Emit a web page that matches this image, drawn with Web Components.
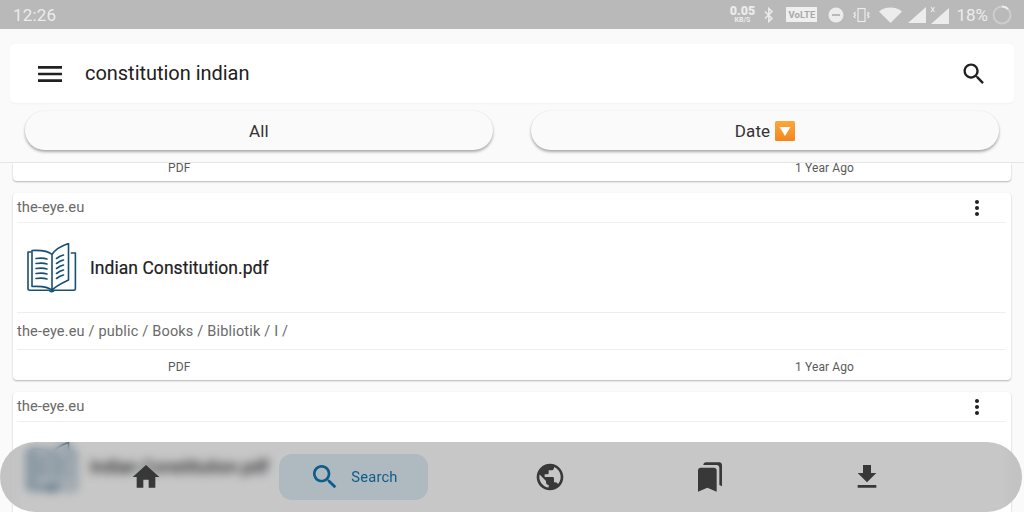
<!DOCTYPE html>
<html>
<head>
<meta charset="utf-8">
<style>
    html, body { margin: 0; height: 100%; }
    body { font-family: Roboto, "Liberation Sans", sans-serif; background: #fafafa; overflow: hidden; }
</style>
</head>
<body>
<app-shell>
    <status-bar></status-bar>
    <search-bar query="constitution indian"></search-bar>
    <filter-row></filter-row>
    <result-list>
        <result-card compact type="PDF" age="1 Year Ago"></result-card>
        <result-card site="the-eye.eu" name="Indian Constitution.pdf" path="the-eye.eu / public / Books / Bibliotik / I /" type="PDF" age="1 Year Ago"></result-card>
        <result-card site="the-eye.eu" name="Indian Constitution.pdf"></result-card>
    </result-list>
    <bottom-nav></bottom-nav>
</app-shell>

<script>
const ICONS = {
    menu: 'M3 18h18v-2H3v2zm0-5h18v-2H3v2zm0-7v2h18V6H3z',
    search: 'M15.5 14h-.79l-.28-.27C15.41 12.59 16 11.11 16 9.5 16 5.91 13.09 3 9.5 3S3 5.91 3 9.5 5.91 16 9.5 16c1.61 0 3.09-.59 4.23-1.57l.27.28v.79l5 4.99L20.49 19l-4.99-5zm-6 0C7.01 14 5 11.99 5 9.5S7.01 5 9.5 5 14 7.01 14 9.5 11.99 14 9.5 14z',
    more: 'M12 8c1.1 0 2-.9 2-2s-.9-2-2-2-2 .9-2 2 .9 2 2 2zm0 2c-1.1 0-2 .9-2 2s.9 2 2 2 2-.9 2-2-.9-2-2-2zm0 6c-1.1 0-2 .9-2 2s.9 2 2 2 2-.9 2-2-.9-2-2-2z',
    home: 'M10 20v-6h4v6h5v-8h3L12 3 2 12h3v8z',
    globe: 'M12 2C6.48 2 2 6.48 2 12s4.48 10 10 10 10-4.48 10-10S17.52 2 12 2zm-1 17.93c-3.95-.49-7-3.85-7-7.93 0-.62.08-1.21.21-1.79L9 15v1c0 1.1.9 2 2 2v1.93zm6.9-2.54c-.26-.81-1-1.39-1.9-1.39h-1v-3c0-.55-.45-1-1-1H8v-2h2c.55 0 1-.45 1-1V7h2c1.1 0 2-.9 2-2v-.41c2.93 1.19 5 4.06 5 7.41 0 2.08-.8 3.97-2.1 5.39z',
    bookmarks: 'M19 18l2 1V3c0-1.1-.9-2-2-2H8.99C7.89 1 7 1.9 7 3h10c1.1 0 2 .9 2 2v13zM15 5H5c-1.1 0-2 .9-2 2v16l7-3 7 3V7c0-1.1-.9-2-2-2z',
    download: 'M19 9h-4V3H9v6H5l7 7 7-7zM5 18v2h14v-2H5z'
};

function icon(name, size, color) {
    return `<svg width="${size}" height="${size}" viewBox="0 0 24 24" fill="${color}" style="display:block;flex:none"><path d="${ICONS[name]}"/></svg>`;
}

class AppShell extends HTMLElement {
    constructor() {
        super();
        this.attachShadow({ mode: 'open' });
        this.shadowRoot.innerHTML = `
            <style>
                :host { display: flex; flex-direction: column; position: relative; width: 1024px; height: 512px; overflow: hidden; background: #fafafa; }
            </style>
            <slot></slot>
        `;
    }
}

class StatusBar extends HTMLElement {
    constructor() {
        super();
        this.attachShadow({ mode: 'open' });
        this.shadowRoot.innerHTML = `
            <style>
                :host { display: flex; align-items: center; flex: none; height: 29px; padding: 0 12px 0 13px; background: #b9b9b9; color: #ececec; }
                .time { font-size: 17px; letter-spacing: .2px; margin-right: auto; }
                .speed { display: flex; flex-direction: column; align-items: center; width: 24px; font-weight: 700; line-height: 1; margin-right: 9px; }
                .speed b { font-size: 12.500px; line-height: 12px; }
                .speed small { font-size: 7px; line-height: 7px; font-weight: 700; }
                .volte { width: 31px; height: 15px; margin: 0 11px 0 11px; background: #efefef; color: #a8a8a8; font-size: 9.500px; font-weight: 700; line-height: 15px; text-align: center; }
                .row { display: flex; align-items: center; }
                .pct { font-size: 17px; margin: 0 4px 0 7px; }
                svg { display: block; flex: none; }
            </style>
            <span class="time">12:26</span>
            <div class="row">
                <div class="speed"><b>0.05</b><small>KB/S</small></div>
                <svg width="12" height="16" viewBox="0 0 12 16" fill="none" stroke="#ececec" stroke-width="1.5"><path d="M2 4.500l7 7-3.200 3V1.500L9 4.500l-7 7"/></svg>
                <div class="volte">VoLTE</div>
                <svg width="16" height="16" viewBox="0 0 16 16"><circle cx="8" cy="8" r="7.500" fill="#ececec"/><rect x="4" y="7" width="8" height="2" fill="#b9b9b9"/></svg>
                <svg width="17" height="16" viewBox="0 0 17 16" fill="none" stroke="#ececec" stroke-width="1.200" style="margin-left:9px"><rect x="5" y="1.500" width="7" height="13"/><path d="M2.500 5l-1.500 1.500 1.500 1.500-1.500 1.500 1.500 1.500M14.500 5l1.500 1.500-1.500 1.500 1.500 1.500-1.500 1.500"/></svg>
                <svg width="23" height="16" viewBox="0 0 23 16" style="margin-left:9px"><path d="M0 4.500C3 2 7 .5 11.500 .5S20 2 23 4.500L11.500 16z" fill="#ececec"/></svg>
                <svg width="19" height="16" viewBox="0 0 19 16" style="margin-left:6px"><path d="M0 16L18 0v16z" fill="#ececec"/></svg>
                <svg width="19" height="18" viewBox="0 0 19 18" style="margin-left:3px"><path d="M1 18L19 2v16z" fill="#ececec"/><path d="M1 1l3.500 5M4.500 1L1 6" stroke="#ececec" stroke-width="1.100"/></svg>
                <span class="pct">18%</span>
                <svg width="20" height="20" viewBox="0 0 20 20" fill="none" stroke-width="2"><circle cx="10" cy="10" r="8.500" stroke="#cdcdcd"/><path d="M10 1.500a8.500 8.500 0 0 1 6 2.500" stroke="#efefef"/></svg>
            </div>
        `;
    }
}

class SearchBar extends HTMLElement {
    constructor() {
        super();
        this.attachShadow({ mode: 'open' });
    }

    connectedCallback() {
        this.shadowRoot.innerHTML = `
            <style>
                :host { display: flex; align-items: center; flex: none; height: 59px; margin: 15px 10px 0; padding: 0 26px 0 24px; background: #fff; border-radius: 5px; box-shadow: 0 1px 2px rgba(0,0,0,.04); }
                .query { flex: 1; margin: 0 0 2px 19px; font-size: 20px; letter-spacing: -.03px; color: #212121; }
            </style>
            ${icon('menu', 32, '#212121')}
            <span class="query">${this.getAttribute('query')}</span>
            ${icon('search', 28, '#212121')}
        `;
    }
}

class PillButton extends HTMLElement {
    constructor() {
        super();
        this.attachShadow({ mode: 'open' });
        this.shadowRoot.innerHTML = `
            <style>
                :host { display: flex; align-items: center; justify-content: center; gap: 5px; flex: 1; height: 39px; border-radius: 20px; background: #fafafa; color: #333; font-size: 17px; letter-spacing: .15px; box-shadow: 0 2px 3px rgba(0,0,0,.32), 0 0 2px rgba(0,0,0,.06); }
            </style>
            <slot></slot>
        `;
    }
}

class FilterRow extends HTMLElement {
    constructor() {
        super();
        this.attachShadow({ mode: 'open' });
        this.shadowRoot.innerHTML = `
            <style>
                :host { display: flex; flex: none; gap: 38px; padding: 8px 25px 12px; border-bottom: 1px solid #e6e6e6; }
            </style>
            <pill-button>All</pill-button>
            <pill-button>Date
                <svg width="20" height="20" viewBox="0 0 20 20" style="display:block">
                    <defs><linearGradient id="o" x1="0" y1="0" x2="0" y2="1"><stop offset="0" stop-color="#fba83c"/><stop offset="1" stop-color="#f4851e"/></linearGradient></defs>
                    <rect width="20" height="20" rx="1.500" fill="url(#o)"/><path d="M4.500 6h11L10 15z" fill="#fff"/>
                </svg>
            </pill-button>
        `;
    }
}

class ResultList extends HTMLElement {
    constructor() {
        super();
        this.attachShadow({ mode: 'open' });
        this.shadowRoot.innerHTML = `
            <style>
                :host { display: flex; flex-direction: column; gap: 12px; flex: 1; min-height: 0; overflow: hidden; padding: 0 13px; background: #fafafa; }
            </style>
            <slot></slot>
        `;
    }
}

class BookIcon extends HTMLElement {
    constructor() {
        super();
        this.attachShadow({ mode: 'open' });
        this.shadowRoot.innerHTML = `
            <style>
                :host { display: block; flex: none; width: 50px; height: 50px; }
                svg { display: block; }
            </style>
            <svg width="50" height="50" viewBox="0 0 50 50" fill="none" stroke="#164f78" stroke-width="1.600" stroke-linecap="round" stroke-linejoin="round">
                <path d="M4 9H1v36.500c0 1 .7 1.700 1.700 1.700h19c1 0 1.400 1.600 3 1.600s2-1.600 3-1.600h19c1 0 1.700-.7 1.700-1.700V10h-4"/>
                <path d="M25 11.500C22 8.500 17 7 5 7.500V43.500C16 43 22 44 25 47.500C27 44.500 33 41 41.500 37V.5C34 3 28 6.500 25 11.500V47.500"/>
                <path d="M9 15.500c4-.5 8-.5 11 .5M9 20.500c4-.5 8-.5 11 .5M9 25.500c4-.5 8-.5 11 .5M9 30.500c4-.5 8-.5 11 .5M9 35.500c4-.5 8-.5 11 .5"/>
                <path d="M29.500 15.500c2-1.500 5-3 7-3.500M29.500 20.500c2-1.500 5-3 7-3.500M29.500 25.500c2-1.500 5-3 7-3.500M29.500 30.500c2-1.500 5-3 7-3.500M29.500 35.500c2-1.500 5-3 7-3.500"/>
            </svg>
        `;
    }
}

class ResultCard extends HTMLElement {
    constructor() {
        super();
        this.attachShadow({ mode: 'open' });
    }

    connectedCallback() {
        const site = this.getAttribute('site');
        const name = this.getAttribute('name');
        const path = this.getAttribute('path');
        const type = this.getAttribute('type');
        const age = this.getAttribute('age');
        this.render(site, name, path, type, age);
    }

    render(site, name, path, type, age) {
        const footer = type ? `<div class="foot ${this.hasAttribute('compact') ? 'short' : ''}"><span>${type}</span><span>${age}</span></div>` : '';
        const body = site ? `
            <div class="head"><span class="site">${site}</span>${icon('more', 24, '#212121')}</div>
            <div class="file ${path ? 'line' : ''}"><book-icon></book-icon><span class="name">${name}</span></div>
            ${path ? `<div class="path">${path}</div>` : ''}
        ` : '';
        this.shadowRoot.innerHTML = `
            <style>
                :host { display: block; flex: none; background: #fff; border-radius: 4px; padding: 0 5px 0 4px; color: #6a6a6a; box-shadow: 0 1px 2px rgba(0,0,0,.28); }
                :host([compact]) { border-radius: 0 0 4px 4px; }
                .head { display: flex; align-items: center; justify-content: space-between; height: 29px; border-bottom: 1px solid #f0f0f0; font-size: 14.800px; padding: 0 17px 0 0; }
                .site { margin-bottom: 2px; }
                .file { display: flex; align-items: center; height: 89px; padding-left: 10px; }
                .file.line { border-bottom: 1px solid #eee; }
                .name { margin: 1px 0 0 13px; font-size: 17.500px; letter-spacing: .05px; color: #212121; -webkit-text-stroke: .2px #212121; }
                .path { display: flex; align-items: center; height: 36px; border-bottom: 1px solid #eee; font-size: 14.500px; letter-spacing: .18px; }
                .foot { display: flex; align-items: center; justify-content: space-between; box-sizing: border-box; height: 30px; padding: 4px 152px 0 151px; font-size: 12px; letter-spacing: .1px; color: #5a5a5a; }
                .foot.short { height: 18px; padding-top: 0; padding-bottom: 8px; line-height: 10px; }
                :host(:last-child) { height: 140px; }
            </style>
            ${body}${footer}
        `;
    }
}

class NavItem extends HTMLElement {
    constructor() {
        super();
        this.attachShadow({ mode: 'open' });
    }

    connectedCallback() {
        const active = this.hasAttribute('active');
        const color = active ? '#0d5c8a' : '#383838';
        this.shadowRoot.innerHTML = `
            <style>
                :host { display: flex; align-items: center; justify-content: center; flex: none; width: 30px; height: 46px; }
                :host([active]) { width: 149px; gap: 10px; border-radius: 13px; background: rgba(0,90,140,.13); color: #0d5c8a; font-size: 14.700px; letter-spacing: .2px; }
            </style>
            ${icon(this.getAttribute('icon'), 32, color)}
            <slot></slot>
        `;
    }
}

class BottomNav extends HTMLElement {
    constructor() {
        super();
        this.attachShadow({ mode: 'open' });
        this.shadowRoot.innerHTML = `
            <style>
                /* floats over the list, blurring it */
                :host { position: absolute; left: 0; bottom: 0; width: 1022px; height: 70px; display: flex; align-items: center; box-sizing: border-box; padding: 0 0 0 131px; border-radius: 35px; background: rgba(0,0,0,.22); -webkit-backdrop-filter: blur(5px); backdrop-filter: blur(5px); }
                nav-item:nth-of-type(2) { margin-left: 118px; }
                nav-item:nth-of-type(3) { margin-left: 107px; }
                nav-item:nth-of-type(4) { margin-left: 130px; }
                nav-item:nth-of-type(5) { margin-left: 127px; }
            </style>
            <nav-item icon="home"></nav-item>
            <nav-item icon="search" active>Search</nav-item>
            <nav-item icon="globe"></nav-item>
            <nav-item icon="bookmarks"></nav-item>
            <nav-item icon="download"></nav-item>
        `;
    }
}

// Register custom elements
customElements.define('book-icon', BookIcon);
customElements.define('nav-item', NavItem);
customElements.define('pill-button', PillButton);
customElements.define('status-bar', StatusBar);
customElements.define('search-bar', SearchBar);
customElements.define('filter-row', FilterRow);
customElements.define('result-card', ResultCard);
customElements.define('result-list', ResultList);
customElements.define('bottom-nav', BottomNav);
customElements.define('app-shell', AppShell);
</script>
</body>
</html>
